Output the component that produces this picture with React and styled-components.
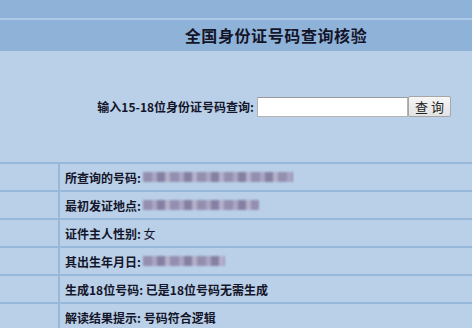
import React from "react"
import styled, { createGlobalStyle } from "styled-components"

const GlobalStyle = createGlobalStyle`
  html, body {
    margin: 0;
    padding: 0;
    background: #b9d0e8;
  }
  body {
    font-family: "Noto Sans CJK SC", "DejaVu Sans", sans-serif;
    color: #15152a;
  }
`

const TopStrip = styled.div`
  height: 18px;
  background: #8fb3d8;
  border-bottom: 2px solid #afcae6;
`

const TitleBar = styled.div`
  height: 31px;
  background: #8fb3d8;
  display: flex;
  align-items: center;
  justify-content: center;
  padding-left: 80px;
  padding-bottom: 2px;
  box-sizing: border-box;
  font-size: 16px;
  font-weight: bold;
  color: #15152a;
  letter-spacing: 0.6px;
`

const SearchArea = styled.div`
  height: 111px;
  box-sizing: border-box;
  padding: 45px 21px 0 0;
  display: flex;
  justify-content: flex-end;
  align-items: flex-start;
`

const SearchForm = styled.form`
  display: flex;
  align-items: center;
  height: 21px;
  margin: 0;
`

const Label = styled.label`
  font-size: 12px;
  font-weight: bold;
  margin-right: 3px;
  white-space: nowrap;
`

const Input = styled.input`
  box-sizing: border-box;
  width: 151px;
  height: 20px;
  margin: 0;
  border: 1px solid #b4b4b4;
  border-top-color: #9a9a9a;
  background: #fff;
  outline: none;
`

const Button = styled.button`
  box-sizing: border-box;
  width: 43px;
  height: 21px;
  margin: 0;
  padding: 0;
  border: 1px solid #a6a6a6;
  border-radius: 2px;
  background: linear-gradient(#f6f6f6, #e2e2e2);
  font-family: "Noto Sans CJK SC", sans-serif;
  font-size: 13px;
  letter-spacing: 3px;
  text-indent: 3px;
  color: #222;
`

const Table = styled.div`
  border-top: 2px solid #98b8da;
`

const Row = styled.div`
  display: grid;
  grid-template-columns: 60px 1fr;
  height: 26px;
  border-bottom: 2px solid #98b8da;
`

const SideCell = styled.div`
  border-right: 2px solid #98b8da;
`

const Cell = styled.div`
  display: flex;
  align-items: center;
  padding-left: 5px;
  font-size: 12px;
  white-space: nowrap;
`

const Key = styled.span`
  font-weight: bold;
`

const Value = styled.span`
  font-weight: ${p => (p.$light ? "normal" : "bold")};
`

const Blurred = styled.span`
  display: inline-block;
  height: 10px;
  margin-left: 2px;
  background: repeating-linear-gradient(
    90deg,
    #8e84a6 0 9px,
    #a79fbd 9px 14px,
    #7d7396 14px 22px,
    #b2abc6 22px 27px
  );
  filter: blur(1.3px);
  opacity: 0.85;
`

const rows = [
  { key: "所查询的号码:", blur: 150 },
  { key: "最初发证地点:", blur: 116 },
  { key: "证件主人性别:", value: "女", light: true },
  { key: "其出生年月日:", blur: 82 },
  { key: "生成18位号码:", value: "已是18位号码无需生成" },
  { key: "解读结果提示:", value: "号码符合逻辑" },
]

export default function App() {
  return (
    <>
      <GlobalStyle />
      <TopStrip />
      <TitleBar>全国身份证号码查询核验</TitleBar>
      <SearchArea>
        <SearchForm onSubmit={e => e.preventDefault()}>
          <Label htmlFor="idno">输入15-18位身份证号码查询:</Label>
          <Input id="idno" type="text" />
          <Button type="submit">查询</Button>
        </SearchForm>
      </SearchArea>
      <Table>
        {rows.map(r => (
          <Row key={r.key}>
            <SideCell />
            <Cell>
              <Key>{r.key}</Key>
              {r.blur ? (
                <Blurred style={{ width: r.blur }} />
              ) : (
                <Value $light={r.light}>&nbsp;{r.value}</Value>
              )}
            </Cell>
          </Row>
        ))}
      </Table>
    </>
  )
}
